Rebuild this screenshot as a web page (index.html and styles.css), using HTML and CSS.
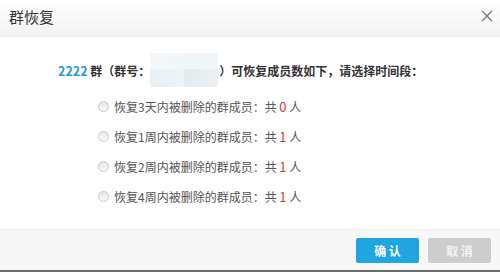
FILE: index.html
```html
<!DOCTYPE html>
<html lang="zh">
<head>
<meta charset="utf-8">
<title>群恢复</title>
<link rel="stylesheet" href="styles.css">
</head>
<body>
<div class="dialog">
  <div class="header">
    <span class="title">群恢复</span>
    <span class="close" aria-label="关闭">
      <svg width="12" height="12" viewBox="0 0 12 12"><path d="M1 1L11 11M11 1L1 11" stroke="#7a7a7a" stroke-width="1.4" fill="none"/></svg>
    </span>
  </div>
  <div class="body">
    <div class="intro">
      <span class="gnum">2222</span><span class="t1">&nbsp;群（群号：</span><span class="blur"></span><span class="t2">）可恢复成员数如下，请选择时间段：</span>
    </div>
    <ul class="options">
      <li><span class="radio"></span>恢复3天内被删除的群成员：共 <em>0</em> 人</li>
      <li><span class="radio"></span>恢复1周内被删除的群成员：共 <em>1</em> 人</li>
      <li><span class="radio"></span>恢复2周内被删除的群成员：共 <em>1</em> 人</li>
      <li><span class="radio"></span>恢复4周内被删除的群成员：共 <em>1</em> 人</li>
    </ul>
  </div>
  <div class="footer">
    <button class="btn ok">确 认</button>
    <button class="btn cancel">取 消</button>
  </div>
</div>
</body>
</html>
```
FILE: styles.css
```css
html, body { margin: 0; padding: 0; background: #fff; }
body { font-family: "Noto Sans CJK SC", "Microsoft YaHei", sans-serif; color: #333; }
.dialog { width: 500px; height: 272px; display: flex; flex-direction: column; box-sizing: border-box; border-bottom: 2px solid #6b6b6b; }
.header { height: 37px; box-sizing: border-box; display: flex; align-items: center; justify-content: space-between; padding: 0 7px 0 9px; background: linear-gradient(#ffffff, #f2f2f2); border-bottom: 1px solid #ededed; }
.title { font-size: 15px; color: #333; line-height: 1; margin-top: -3px; }
.close { width: 12px; height: 12px; display: flex; margin-top: -4px; }
.body { flex: 1; padding: 16px 0 0 58px; }
.intro { display: flex; align-items: center; font-size: 12px; font-weight: bold; color: #333; height: 34px; }
.gnum { color: #2a9ad6; font-size: 12.5px; }
.blur { width: 68px; height: 34px; margin: 0 1px 0 0; position: relative; background: linear-gradient(90deg, #e9f0f3 0, #eef3f5 50%, #e4ebee 50%, #eaf0f2 100%); }
.blur::after { content: ""; position: absolute; left: 0; right: 0; top: 0; height: 16px; background: linear-gradient(90deg, #f4f8fa, #eef4f7); }
.options { list-style: none; margin: 4px 0 0 40px; padding: 0; }
.options li { display: flex; align-items: center; height: 30px; font-size: 12px; color: #555; white-space: pre; }
.options em { font-style: normal; color: #d83a30; font-size: 13px; }
.radio { width: 9px; height: 9px; border: 1px solid #c8c8c8; border-radius: 50%; background: linear-gradient(#e6e6e6, #fafafa); margin-right: 5px; box-sizing: content-box; }
.footer { height: 40px; background: #f7f7f7; border-top: 1px solid #efefef; display: flex; justify-content: flex-end; align-items: center; gap: 9px; padding-right: 9px; }
.btn { width: 63px; height: 25px; border: none; border-radius: 2px; font-family: inherit; font-size: 12px; font-weight: bold; color: #fff; padding: 0; }
.ok { background: #1fa6e0; }
.cancel { background: #cdcdcd; color: #f4f4f4; }
```
